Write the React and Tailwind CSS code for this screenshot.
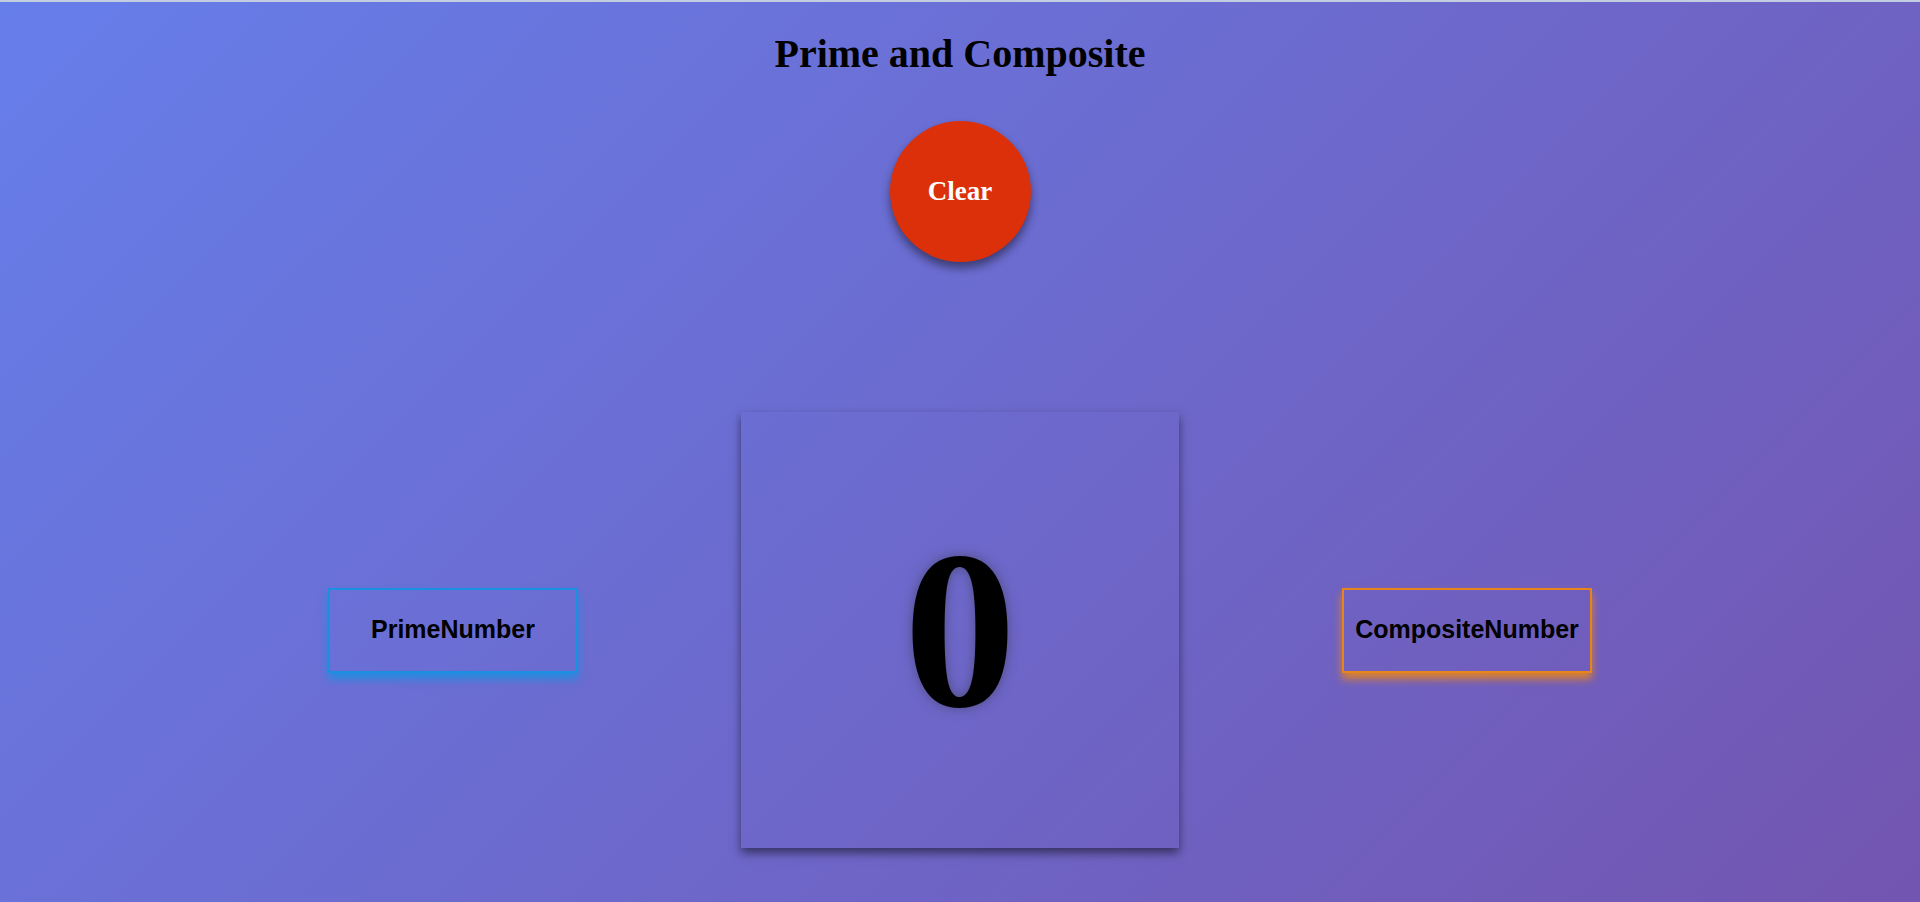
export default function App() {
  return (
    <div className="min-h-[902px] w-full border-t-2 border-[#c3cde2] bg-[linear-gradient(135deg,#667eea_0%,#764ba2_125%)] font-['Liberation_Serif',serif] text-black">
      {/* Titre */}
      <h1 className="pt-[32px] text-center text-[40px] font-bold leading-[40px]">
        Prime and Composite
      </h1>

      {/* Bouton rond */}
      <div className="mt-[47px] flex justify-center">
        <button className="flex h-[141px] w-[141px] items-center justify-center rounded-full bg-[#db300a] text-[27px] font-bold text-white shadow-[0_6px_10px_rgba(0,0,0,0.45)]">
          Clear
        </button>
      </div>

      {/* Zone principale */}
      <div className="mt-[150px] flex items-center justify-center gap-[163px]">
        <button className="flex h-[85px] w-[250px] items-center justify-center border-2 border-[#1b8fe0] font-['Liberation_Sans',Arial,sans-serif] text-[25px] font-bold shadow-[0_6px_8px_rgba(27,143,224,0.9)]">
          PrimeNumber
        </button>

        <div className="flex h-[436px] w-[438px] items-center justify-center shadow-[0_5px_9px_rgba(0,0,0,0.5)]">
          <span className="text-[224px] font-bold leading-none [text-shadow:0_0_12px_rgba(60,60,80,0.6)]">
            0
          </span>
        </div>

        <button className="flex h-[85px] w-[250px] items-center justify-center border-2 border-[#e8841c] font-['Liberation_Sans',Arial,sans-serif] text-[25px] font-bold shadow-[0_6px_8px_rgba(232,132,28,0.9)]">
          CompositeNumber
        </button>
      </div>
    </div>
  )
}
